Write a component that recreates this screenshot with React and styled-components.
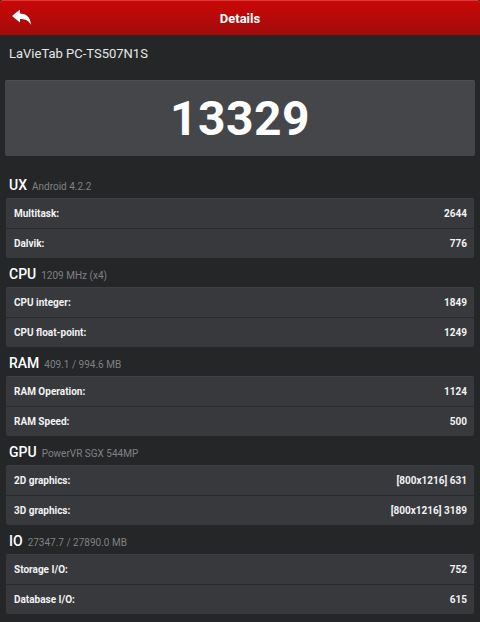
import React from 'react';
import styled, { createGlobalStyle } from 'styled-components';

const GlobalStyle = createGlobalStyle`
    html, body {
        margin: 0;
        padding: 0;
        background: #252628;
        font-family: Roboto, "Liberation Sans", sans-serif;
    }
`;

const Page = styled.div`
    width: 480px;
    height: 622px;
    overflow: hidden;
    background: #252628;
`;

const TopBar = styled.div`
    height: 35px;
    position: relative;
    display: flex;
    align-items: center;
    justify-content: center;
    background: linear-gradient(#c90707, #a10c0c);
    border-top: 1px solid #d63a3a;
    box-sizing: border-box;
    border-radius: 3px 3px 0 0;
`;

const BackBtn = styled.button`
    position: absolute;
    left: 11px;
    top: 8px;
    width: 22px;
    height: 18px;
    padding: 0;
    border: none;
    background: none;
    display: flex;
`;

const Title = styled.h1`
    margin: 0;
    font-size: 13px;
    font-weight: 700;
    color: #fff;
`;

const DeviceName = styled.div`
    height: 45px;
    display: flex;
    align-items: center;
    padding: 0 0 8px 9px;
    box-sizing: border-box;
    font-size: 13px;
    color: #e6e6e6;
`;

const ScoreBox = styled.div`
    margin: 0 5px 13px;
    height: 76px;
    display: flex;
    align-items: center;
    justify-content: center;
    background: #45464a;
    border-top: 1px solid #4c4d51;
    border-radius: 2px;
    box-sizing: border-box;
    font-size: 48px;
    font-weight: 700;
    color: #fff;
    letter-spacing: 0.5px;
`;

const Heading = styled.div`
    height: 29px;
    display: flex;
    align-items: baseline;
    gap: 5px;
    padding: 8px 0 0 9px;
    box-sizing: border-box;
`;

const HeadMain = styled.span`
    font-size: 14px;
    color: #fff;
    font-weight: 500;
`;

const HeadSub = styled.span`
    font-size: 10px;
    color: #808184;
`;

const Card = styled.div`
    margin: 0 6px;
    background: #38393d;
    border-top: 1px solid #3f4044;
    border-radius: 2px;
`;

const Row = styled.div`
    height: 29px;
    display: flex;
    align-items: center;
    justify-content: space-between;
    padding: 0 7px 0 8px;
    border-top: ${p => (p.first ? 'none' : '1px solid #2a2b2e')};
    font-size: 10px;
    font-weight: 700;
    color: #f2f2f2;
`;

const sections = [
    { name: 'UX', sub: 'Android 4.2.2', rows: [['Multitask:', '2644'], ['Dalvik:', '776']] },
    { name: 'CPU', sub: '1209 MHz (x4)', rows: [['CPU integer:', '1849'], ['CPU float-point:', '1249']] },
    { name: 'RAM', sub: '409.1 / 994.6 MB', rows: [['RAM Operation:', '1124'], ['RAM Speed:', '500']] },
    { name: 'GPU', sub: 'PowerVR SGX 544MP', rows: [['2D graphics:', '[800x1216] 631'], ['3D graphics:', '[800x1216] 3189']] },
    { name: 'IO', sub: '27347.7 / 27890.0 MB', rows: [['Storage I/O:', '752'], ['Database I/O:', '615']] },
];

const BackIcon = () => (
    <svg width="22" height="18" viewBox="0 0 22 18">
        <path d="M1 7 L9 0.5 L9 4.5 C15 4.5 19.5 8 20 16 C18 12 15 10 9 10 L9 13.5 Z" fill="#fff" />
    </svg>
);

export default function App() {
    return (
        <Page>
            <GlobalStyle />
            <TopBar>
                <BackBtn><BackIcon /></BackBtn>
                <Title>Details</Title>
            </TopBar>
            <DeviceName>LaVieTab PC-TS507N1S</DeviceName>
            <ScoreBox>13329</ScoreBox>
            {sections.map(s => (
                <div key={s.name}>
                    <Heading>
                        <HeadMain>{s.name}</HeadMain>
                        <HeadSub>{s.sub}</HeadSub>
                    </Heading>
                    <Card>
                        {s.rows.map(([label, value], i) => (
                            <Row key={label} first={i === 0}>
                                <span>{label}</span>
                                <span>{value}</span>
                            </Row>
                        ))}
                    </Card>
                </div>
            ))}
        </Page>
    );
}
